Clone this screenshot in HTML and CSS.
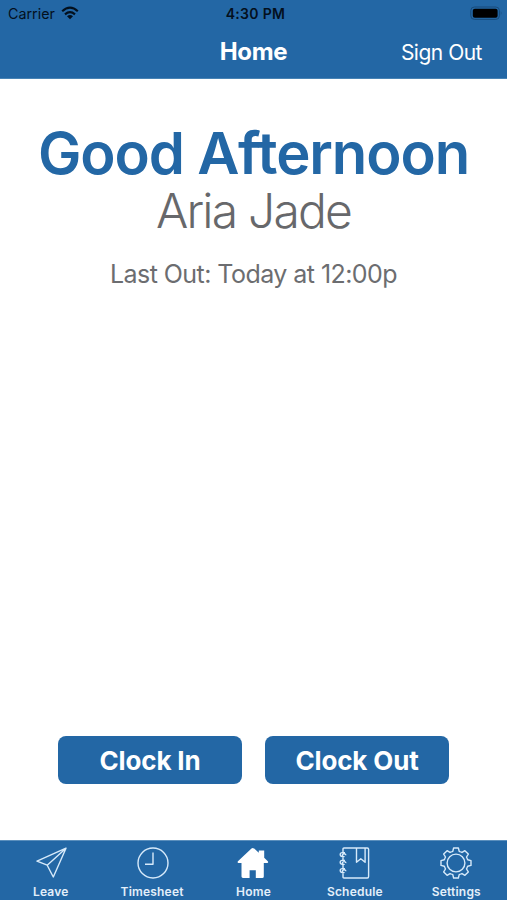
FILE: index.html
```html
<!DOCTYPE html>
<html lang="en">
<head>
<meta charset="utf-8">
<title>Home</title>
<link rel="stylesheet" href="styles.css">
</head>
<body>
<div class="app">
  <header class="header">
    <div class="status">
      <div class="carrier"><span class="carrier-name">Carrier</span>
        <svg class="wifi" width="18" height="14" viewBox="0 0 18 14"><g fill="none" stroke="#03101d" stroke-width="2.2"><path d="M1.2 5.2Q9 -1.8 16.8 5.2"/><path d="M4 8.3Q9 4 14 8.3"/></g><path d="M6 10.2Q9 7.9 12 10.2L9 13.2Z" fill="#03101d"/></svg>
      </div>
      <span class="time">4:30 PM</span>
      <svg class="battery" width="33" height="15" viewBox="0 0 33 15"><rect x=".8" y="1" width="28.6" height="12.4" rx="3.6" fill="none" stroke="#184b7a"/><rect x="2.8" y="2.8" width="24.8" height="9" rx="2" fill="#000"/><path d="M30.8 5q1.6 2.2 0 4.4Z" fill="#184b7a"/></svg>
    </div>
    <div class="nav"><h1 class="title">Home</h1><a class="signout">Sign Out</a></div>
  </header>
  <main class="main">
    <h2 class="greeting">Good Afternoon</h2>
    <p class="name">Aria Jade</p>
    <p class="last">Last Out: Today at 12:00p</p>
    <div class="actions">
      <button class="action">Clock In</button>
      <button class="action">Clock Out</button>
    </div>
  </main>
  <nav class="tabs">
    <a class="tab"><svg class="icon" viewBox="0 0 32 32"><path d="M31 1.2L2 14.2L12.2 18.2L18.3 30Z M31 1.2L12.2 18.2"/></svg><span class="label">Leave</span></a>
    <a class="tab"><svg class="icon" viewBox="0 0 32 32"><circle cx="17" cy="16" r="15"/><path d="M17 5.5V17.3H9"/></svg><span class="label">Timesheet</span></a>
    <a class="tab"><svg class="icon solid" viewBox="0 0 32 32"><path d="M16 1.2Q15.3 .8 14.5 1.5L.9 14.2Q.1 15.8 1.5 16H4.5V29.6Q4.5 31 6 31H12.6V23.2H18.8V31H25.2Q26.8 31 26.8 29.5V16H30.2Q31.8 15.7 30.8 14.2L27.2 10.8V3.4H21.8V5.8L17.2 1.5Z"/></svg><span class="label">Home</span></a>
    <a class="tab"><svg class="icon" viewBox="0 0 32 32"><path d="M4 5.6V2Q4 1 5 1H28.3Q29.6 1 29.6 2.3V29.5Q29.6 31 28.3 31H5Q4 31 4 30V26.2 M4 10.2V13.4M4 18V21.6 M17.5 1V15.3L21.8 11.8L26.1 15.3V1"/><path d="M6.8 8.3a1.7 1.4 0 1 0-1.7 1.3H3.2a2 2 0 0 1 0-4H6M6.8 16.1a1.7 1.4 0 1 0-1.7 1.3H3.2a2 2 0 0 1 0-4H6M6.8 24.3a1.7 1.4 0 1 0-1.7 1.3H3.2a2 2 0 0 1 0-4H6"/></svg><span class="label">Schedule</span></a>
    <a class="tab"><svg class="icon" viewBox="0 0 32 32"><defs><path id="tooth" d="M-4.6-11.1L-3.2-11.7L-2.4-15H2.4L3.2-11.7L4.6-11.1"/></defs><g transform="translate(16 16)"><circle r="8.9"/><use href="#tooth"/><use href="#tooth" transform="rotate(45)"/><use href="#tooth" transform="rotate(90)"/><use href="#tooth" transform="rotate(135)"/><use href="#tooth" transform="rotate(180)"/><use href="#tooth" transform="rotate(225)"/><use href="#tooth" transform="rotate(270)"/><use href="#tooth" transform="rotate(315)"/></g></svg><span class="label">Settings</span></a>
  </nav>
</div>
</body>
</html>
```
FILE: styles.css
```css
* { box-sizing: border-box; }
body { margin: 0; font-family: Inter, "Liberation Sans", sans-serif; background: #fff; }
h1, h2, p { margin: 0; font-weight: inherit; }
.app { height: 900px; display: flex; flex-direction: column; }
.header { height: 79px; background: #2367a5; border-bottom: 1px solid #4783b5; }
.status { height: 26px; display: grid; grid-template-columns: 1fr auto 1fr; align-items: center; padding: 1px 4px 0 8px; color: #03101d; }
.carrier { display: flex; align-items: center; gap: 6px; font-size: 14.3px; }
.wifi { margin-top: -1px; }
.time { font-size: 14px; font-weight: 600; letter-spacing: .3px; }
.battery { justify-self: end; }
.nav { height: 50px; display: grid; grid-template-columns: 1fr auto 1fr; align-items: center; color: #fff; padding: 0 25px; }
.title { grid-column: 2; font-size: 24px; font-weight: 700; letter-spacing: -.3px; }
.signout { justify-self: end; margin-top: 2px; font-size: 21px; letter-spacing: -.5px; }
.main { flex: 1; display: flex; flex-direction: column; align-items: center; white-space: nowrap; }
.greeting { margin-top: 41px; line-height: 66px; font-size: 58px; font-weight: 600; color: #2367a5; letter-spacing: -1.1px; font-variant-ligatures: none; }
.name { line-height: 50px; font-size: 48px; font-weight: 300; color: #67686b; letter-spacing: -1.8px; }
.last { margin-top: 22px; line-height: 32px; font-size: 25px; color: #6c6d70; letter-spacing: -.55px; }
.actions { margin-top: auto; margin-bottom: 56px; display: flex; gap: 23px; }
.action { width: 184px; height: 48px; border: 0; border-radius: 8px; padding: 0; background: #2367a5; color: #fff; font: 700 26px Inter, "Liberation Sans", sans-serif; letter-spacing: -.15px; }
.tabs { height: 60px; border-top: 1px solid #5b8fbd; background: #2367a5; display: grid; grid-template-columns: repeat(5, 1fr); }
.tab { display: flex; flex-direction: column; align-items: center; padding-top: 6px; color: #e3effa; }
.icon { width: 32px; height: 32px; overflow: visible; fill: none; stroke: #d7eafa; stroke-width: 1.4; stroke-linejoin: round; }
.solid { fill: #fff; stroke: none; }
.label { margin-top: 6px; line-height: 14px; font-size: 12px; font-weight: 600; letter-spacing: .2px; }
```
